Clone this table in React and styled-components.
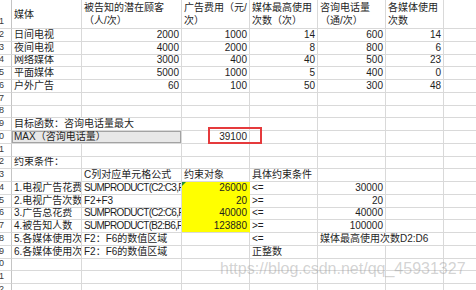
import React from 'react';
import styled, { createGlobalStyle } from 'styled-components';

const GlobalStyle = createGlobalStyle`
  html, body {
    margin: 0;
    padding: 0;
    background: #fff;
  }
  body {
    width: 476px;
    height: 290px;
    overflow: hidden;
    font-family: "Liberation Sans", "Noto Sans CJK SC", sans-serif;
  }
`;

const Sheet = styled.div`
  position: relative;
  width: 476px;
  height: 290px;
  overflow: hidden;
`;

const Grid = styled.div`
  display: grid;
  grid-template-columns: 12px 70px 100px 68px 68px 68px 58px 40px;
  grid-template-rows: 29px;
  grid-auto-rows: 12.75px;
  font-size: 10px;
  color: #1e1e1e;
`;

const RowNum = styled.div`
  display: flex;
  justify-content: flex-end;
  align-items: ${(p) => (p.$bottom ? 'flex-end' : 'center')};
  padding: 0 7px 2px 0;
  box-sizing: border-box;
  font-size: 9px;
  line-height: 10px;
  color: #3a3a3a;
  white-space: nowrap;
  overflow: hidden;
  border-right: 1px solid #c4c4c4;
  border-bottom: 1px solid #d9d9d9;
`;

const Cell = styled.div`
  position: relative;
  grid-column: span ${(p) => p.$span || 1};
  display: flex;
  align-items: center;
  justify-content: ${(p) => (p.$right ? 'flex-end' : 'flex-start')};
  padding: 0 2px;
  box-sizing: border-box;
  line-height: 12px;
  letter-spacing: ${(p) => (p.$tight ? '-0.7px' : 'normal')};
  white-space: nowrap;
  overflow: hidden;
  background: ${(p) => (p.$fill ? '#ffff00' : p.$shade ? '#e8e8e8' : 'transparent')};
  border-right: 1px solid ${(p) => (p.$fill ? '#ffff00' : '#d9d9d9')};
  border-bottom: 1px solid ${(p) => (p.$fill && !p.$last ? '#ffff00' : '#d9d9d9')};
  box-shadow: ${(p) => (p.$shade ? 'inset 0 0 0 1px #a3a3a3' : 'none')};
`;

const HeadText = styled.div`
  line-height: 13px;
  white-space: nowrap;
`;

const ErrorMark = styled.span`
  position: absolute;
  top: 0;
  left: 0;
  width: 0;
  height: 0;
  border-top: 4px solid #1f8f3a;
  border-right: 4px solid transparent;
`;

const Highlight = styled.div`
  position: absolute;
  left: 208px;
  top: 127px;
  width: 54px;
  height: 17px;
  box-sizing: border-box;
  border: 2px solid #e53a3c;
`;

const Watermark = styled.div`
  position: absolute;
  left: 220px;
  top: 261px;
  font-size: 16px;
  line-height: 16px;
  color: rgba(150, 150, 150, 0.42);
  white-space: nowrap;
`;

const Y = { fill: true };

const rows = [
  [
    { lines: ['媒体'] },
    { lines: ['被告知的潜在顾客', '（人/次）'] },
    { lines: ['广告费用（元/', '次）'] },
    { lines: ['媒体最高使用', '次数（次）'] },
    { lines: ['咨询电话量', '（通/次）'] },
    { lines: ['各媒体使用', '次数'] },
    null,
  ],
  ['日间电视', 2000, 1000, 14, 600, 14, null],
  ['夜间电视', 4000, 2000, 8, 800, 6, null],
  ['网络媒体', 3000, 400, 40, 500, 23, null],
  ['平面媒体', 5000, 1000, 5, 400, 0, null],
  ['户外广告', 60, 100, 50, 300, 48, null],
  [null, null, null, null, null, null, null],
  [null, null, null, null, null, null, null],
  [{ t: '目标函数：咨询电话量最大', span: 2 }, null, null, null, null, null],
  [{ t: 'MAX（咨询电话量）', span: 2, shade: true }, 39100, null, null, null, null],
  [null, null, null, null, null, null, null],
  ['约束条件：', null, null, null, null, null, null],
  [null, 'C列对应单元格公式', '约束对象', '具体约束条件', null, null, null],
  ['1.电视广告花费', { t: 'SUMPRODUCT(C2:C3,F2:F3)', tight: true }, { t: 26000, ...Y, mark: true }, '<=', 30000, null, null],
  ['2.电视广告次数', 'F2+F3', { t: 20, ...Y }, '>=', 20, null, null],
  ['3.广告总花费', { t: 'SUMPRODUCT(C2:C6,F2:F6)', tight: true }, { t: 40000, ...Y }, '<=', 40000, null, null],
  ['4.被告知人数', { t: 'SUMPRODUCT(B2:B6,F2:F6)', tight: true }, { t: 123880, ...Y, last: true }, '>=', 100000, null, null],
  ['5.各媒体使用次', 'F2：F6的数值区域', null, '<=', { t: '媒体最高使用次数D2:D6', span: 2 }, null],
  ['6.各媒体使用次', 'F2：F6的数值区域', null, '正整数', null, null, null],
  [null, null, null, null, null, null, null],
  [null, null, null, null, null, null, null],
  [null, null, null, null, null, null, null],
];

const toCell = (c) => {
  if (c === null) return { t: '' };
  if (typeof c === 'object') return c;
  return { t: c };
};

const App = () => (
  <Sheet>
    <GlobalStyle />
    <Grid>
      {rows.map((row, r) => (
        <React.Fragment key={r}>
          <RowNum $bottom={r === 0}>{r + 1}</RowNum>
          {row.map((raw, c) => {
            const cell = toCell(raw);
            return (
              <Cell
                key={c}
                $span={cell.span}
                $right={typeof cell.t === 'number'}
                $fill={cell.fill}
                $last={cell.last}
                $shade={cell.shade}
                $tight={cell.tight}
              >
                {cell.mark && <ErrorMark />}
                {cell.lines ? (
                  <div>
                    {cell.lines.map((l) => (
                      <HeadText key={l}>{l}</HeadText>
                    ))}
                  </div>
                ) : (
                  cell.t
                )}
              </Cell>
            );
          })}
        </React.Fragment>
      ))}
    </Grid>
    <Highlight />
    <Watermark>https://blog.csdn.net/qq_45931327</Watermark>
  </Sheet>
);

export default App;
